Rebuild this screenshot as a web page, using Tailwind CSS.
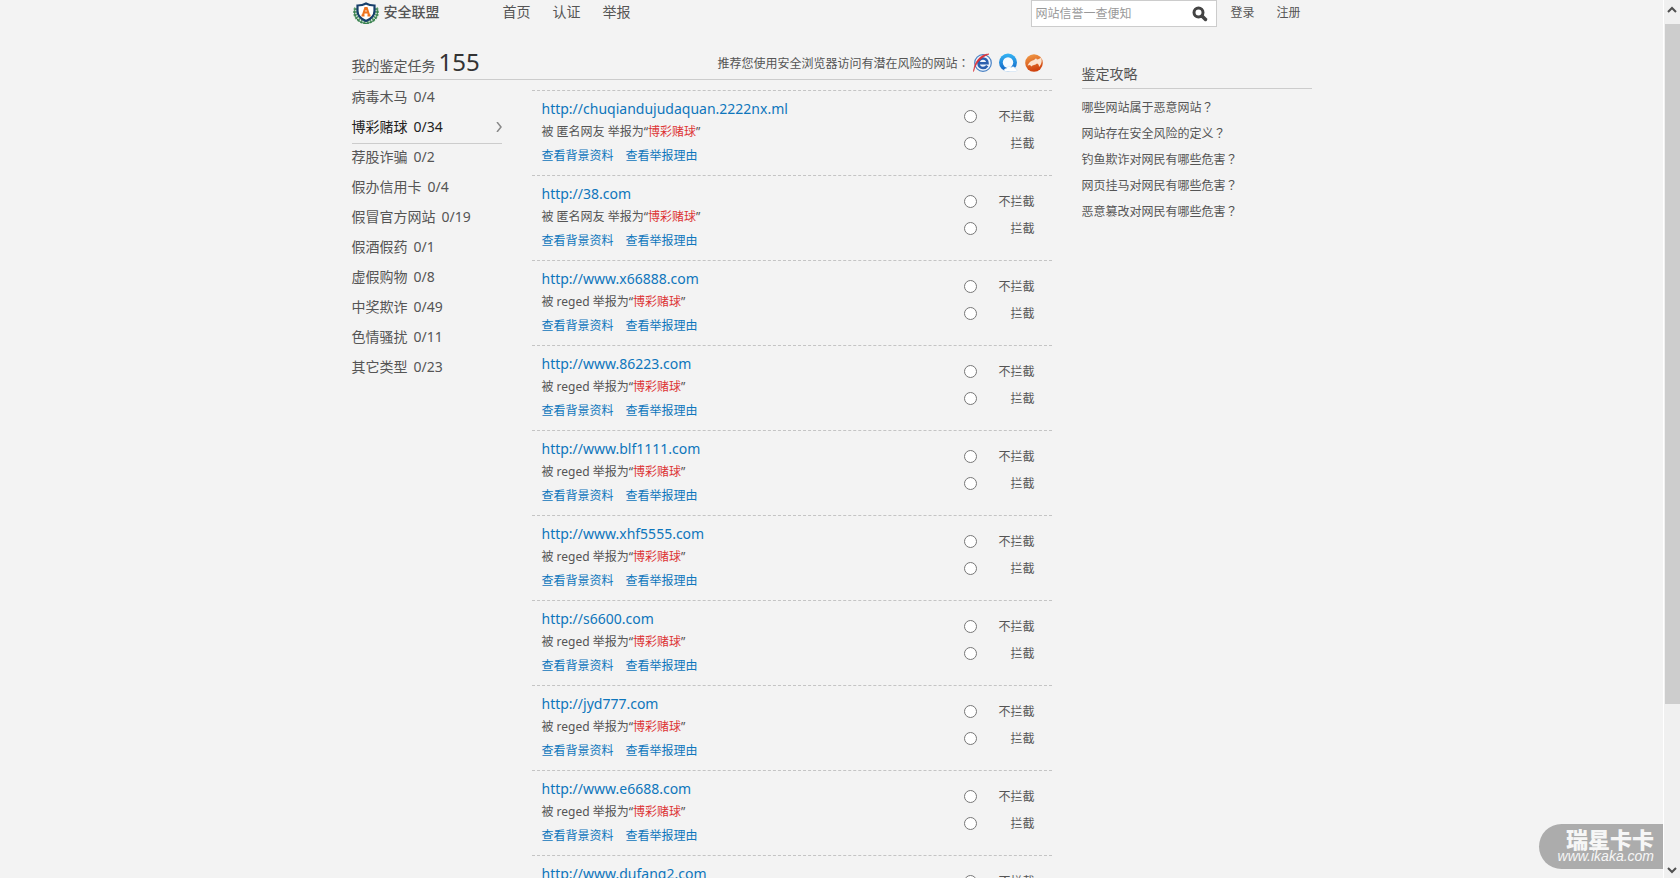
<!DOCTYPE html>
<html lang="zh-CN">
<head>
    <meta charset="UTF-8">
    <meta name="viewport" content="width=device-width, initial-scale=1.0">
    <title>安全联盟 - 我的鉴定任务</title>
    <!-- Tailwind CSS -->
    <script src="https://cdn.jsdelivr.net/npm/@tailwindcss/browser@4"></script>
</head>
<body class="flex h-screen overflow-hidden bg-[#f3f3f3] text-[#555] text-xs font-['Noto_Sans','Noto_Sans_CJK_SC',sans-serif]">
    <div class="relative flex-1 h-full overflow-hidden">
        <div class="mx-auto max-w-[960px]">
            <!-- Top bar -->
            <header class="flex items-start h-[26px]">
                <a href="#" class="flex items-center gap-1 w-[151px] h-6">
                    <svg class="w-[28px] h-[24px]" viewBox="0 0 28 24">
                        <path d="M4 8C1 15 6 22 14 22C22 22 27 15 24 8" fill="none" stroke="#5b9a6c" stroke-width="4" stroke-dasharray="2 1" />
                        <path d="M3 9C1 16 6 23 14 23.500C22 23 27 16 25 9" fill="none" stroke="#2f7a48" stroke-width="1" />
                        <path d="M14 3.500C11.500 5 8.500 5.500 5.500 5.500V11C5.500 16 9 19 14 21C19 19 22.500 16 22.500 11V5.500C19.500 5.500 16.500 5 14 3.500Z" fill="#fff" stroke="#173f6b" stroke-width="2.200" />
                        <path d="M9.500 15.500H12.500M15.500 15.500H18.500M11 15L13.300 8H14.700L17 15M12 12.500H16" fill="none" stroke="#ee7420" stroke-width="2.200" />
                    </svg>
                    <span class="text-sm leading-6 font-medium">安全联盟</span>
                </a>
                <nav class="flex gap-[22px] text-sm leading-6">
                    <a href="#">首页</a>
                    <a href="#">认证</a>
                    <a href="#">举报</a>
                </nav>
                <form class="ml-auto flex w-[186px] h-[27px] border border-[#ccc] bg-white">
                    <input type="text" aria-label="网站信誉" placeholder="网站信誉一查便知" class="w-full min-w-0 px-1 outline-none placeholder:text-[#999]">
                    <button type="button" aria-label="搜索" class="w-8 shrink-0 flex items-center justify-center">
                        <svg class="w-4 h-4" viewBox="0 0 16 16" fill="none" stroke="#444">
                            <circle cx="6.500" cy="6.500" r="4.500" stroke-width="3" />
                            <path d="M10 10L13.500 13.500" stroke-width="3.500" stroke-linecap="round" />
                        </svg>
                    </button>
                </form>
                <div class="flex gap-[22px] pl-[14px] w-[95px] leading-[26px]">
                    <a href="#">登录</a>
                    <a href="#">注册</a>
                </div>
            </header>

            <main class="flex gap-[30px] pt-5">
                <div class="w-[700px]">
                    <div class="flex items-start justify-between h-[34px] border-b border-[#ccc]">
                        <h1 class="flex items-baseline gap-[3px] text-sm leading-8">我的鉴定任务<span class="text-2xl leading-8 text-[#333]">155</span></h1>
                        <div class="flex items-center gap-[6px] pt-[2px] pr-2 h-8">
                            <p class="-mr-1">推荐您使用安全浏览器访问有潜在风险的网站<span class="font-['Noto_Sans_CJK_TC',sans-serif]" lang="zh-TW">：</span></p>
                            <a href="#" aria-label="IE">
                                <svg class="w-5 h-5" viewBox="0 0 20 20" fill="none">
                                    <circle cx="11" cy="10" r="8.300" fill="#eef4fc" stroke="#4a82c4" stroke-width="1.200" />
                                    <path d="M6.500 10.300H15.500C15.500 7 13.500 5.500 11 5.500C8.300 5.500 6.500 7.600 6.500 10.300C6.500 13 8.400 15 11 15C13 15 14.400 14.200 15.300 12.800" stroke="#2b5fae" stroke-width="2.600" />
                                    <path d="M17 1C9 1 2.500 8 1.500 18.500C3.500 11 8 4.500 17 1Z" fill="#dc2f35" stroke="#dc2f35" stroke-width="0.600" />
                                </svg>
                            </a>
                            <a href="#" aria-label="QQ浏览器">
                                <svg class="w-5 h-5" viewBox="0 0 20 20">
                                    <defs>
                                        <linearGradient id="qq" x1="0" y1="0" x2="0" y2="1"><stop offset="0" stop-color="#35b5f5" /><stop offset="1" stop-color="#1263c4" /></linearGradient>
                                    </defs>
                                    <circle cx="10" cy="9.500" r="9" fill="url(#qq)" />
                                    <circle cx="10" cy="9.500" r="5.200" fill="#f8fbff" />
                                    <path d="M8 18.500C5.500 18.500 5.500 15.500 8.500 15.500C9 13 12 12.500 13 14.500C15 13 17 14 17 15.500C19.500 15.800 19.500 18.500 17.500 18.500Z" fill="#fff" stroke="#c9dff3" stroke-width="0.600" />
                                </svg>
                            </a>
                            <a href="#" aria-label="猎豹浏览器">
                                <svg class="w-5 h-5" viewBox="0 0 20 20">
                                    <defs>
                                        <linearGradient id="lb" x1="0" y1="0" x2="0.300" y2="1"><stop offset="0" stop-color="#f3a04a" /><stop offset="1" stop-color="#cf420e" /></linearGradient>
                                    </defs>
                                    <circle cx="10" cy="10" r="8.800" fill="url(#lb)" />
                                    <path d="M3.500 12.500C5 9.500 7 7.500 10 7L12 5.200L13 6.500C15 6 16.500 4.500 17 5C18.500 7.500 17.500 11.500 15 14C15 12 14.500 11 13 10.500C11.500 12.500 8.500 11.500 7.500 13.500L6 12Z" fill="#fbe3cf" />
                                </svg>
                            </a>
                        </div>
                    </div>
                    <div class="flex justify-between">
                        <ul id="categories" class="w-[150px] pt-[2px] text-sm"></ul>
                        <div id="tasks" class="w-[520px] mt-[10px] border-t border-dashed border-[#c4c4c4]"></div>
                    </div>
                </div>
                <aside class="w-[230px] pt-4">
                    <h2 class="h-[27px] text-sm leading-6 border-b border-[#ccc]">鉴定攻略</h2>
                    <ul class="grid auto-rows-[26px] pt-[5px] leading-[26px]">
                        <li><a href="#">哪些网站属于恶意网站<span class="font-['Noto_Sans_CJK_TC',sans-serif]" lang="zh-TW">？</span></a></li>
                        <li><a href="#">网站存在安全风险的定义<span class="font-['Noto_Sans_CJK_TC',sans-serif]" lang="zh-TW">？</span></a></li>
                        <li><a href="#">钓鱼欺诈对网民有哪些危害<span class="font-['Noto_Sans_CJK_TC',sans-serif]" lang="zh-TW">？</span></a></li>
                        <li><a href="#">网页挂马对网民有哪些危害<span class="font-['Noto_Sans_CJK_TC',sans-serif]" lang="zh-TW">？</span></a></li>
                        <li><a href="#">恶意篡改对网民有哪些危害<span class="font-['Noto_Sans_CJK_TC',sans-serif]" lang="zh-TW">？</span></a></li>
                    </ul>
                </aside>
            </main>
        </div>

        <!-- Watermark -->
        <div class="absolute right-0 bottom-[9px] w-[124px] h-[45px] pt-1 pr-[9px] rounded-l-full bg-[#acacac] text-[#f6f6f6] text-right">
            <p class="text-[22px] leading-[22px] font-black">瑞星卡卡</p>
            <p class="text-sm leading-3 italic font-['Liberation_Sans',sans-serif]">www.ikaka.com</p>
        </div>
    </div>

    <!-- Scrollbar -->
    <div class="flex flex-col justify-between items-center w-[17px] h-full border-l border-white bg-[#f0f0f0]">
        <svg class="w-4 h-6" viewBox="0 0 16 24" fill="none" stroke="#505050" stroke-width="2"><path d="M4 12L8 8L12 12" /></svg>
        <div class="w-[15px] mb-auto h-[77.5%] bg-[#cdcdcd]"></div>
        <svg class="w-4 h-4" viewBox="0 0 16 16" fill="none" stroke="#505050" stroke-width="2"><path d="M4 6L8 10L12 6" /></svg>
    </div>

    <script>
        const categories = [
            ['病毒木马', '0/4'], ['博彩赌球', '0/34'], ['荐股诈骗', '0/2'], ['假办信用卡', '0/4'], ['假冒官方网站', '0/19'],
            ['假酒假药', '0/1'], ['虚假购物', '0/8'], ['中奖欺诈', '0/49'], ['色情骚扰', '0/11'], ['其它类型', '0/23']
        ];
        const tasks = [
            ['chuqiandujudaquan.2222nx.ml', '匿名网友'], ['38.com', '匿名网友'], ['www.x66888.com', 'reged'],
            ['www.86223.com', 'reged'], ['www.blf1111.com', 'reged'], ['www.xhf5555.com', 'reged'], ['s6600.com', 'reged'],
            ['jyd777.com', 'reged'], ['www.e6688.com', 'reged'], ['www.dufang2.com', 'reged']
        ];

        // The second category is the open one
        document.getElementById('categories').innerHTML = categories.map(([name, count], i) => `
            <li class="h-[30px]"><a href="#" class="flex items-center gap-[6px] ${i === 1 ? 'h-8 pb-[1px] border-b border-[#ccc] text-[#222]' : 'h-[30px]'}">
                <span>${name}</span><span>${count}</span>
                ${i === 1 ? '<svg class="ml-auto w-[6px] h-[10px]" viewBox="0 0 6 10" fill="none" stroke="#888" stroke-width="1.500"><path d="M1 0L5 5L1 10" /></svg>' : ''}
            </a></li>`).join('');

        document.getElementById('tasks').innerHTML = tasks.map(([site, user], i) => `
            <article class="flex justify-between h-[85px] pl-[10px] pr-[17px] border-b border-dashed border-[#c4c4c4]">
                <div class="pt-[7px]">
                    <h3 class="text-sm leading-[22px] text-[#0e76bc]"><a href="#">http://${site}</a></h3>
                    <p class="leading-6">被 ${user} 举报为“<span class="text-[#dd3333]">博彩赌球</span>”</p>
                    <p class="flex gap-3 leading-6 text-[#0e76bc]"><a href="#">查看背景资料</a><a href="#">查看举报理由</a></p>
                </div>
                <div class="w-[71px] pt-3 leading-[27px]">
                    <label class="flex items-center justify-between"><input type="radio" name="task${i}" class="w-[13px] h-[13px]">不拦截</label>
                    <label class="flex items-center justify-between"><input type="radio" name="task${i}" class="w-[13px] h-[13px]">拦截</label>
                </div>
            </article>`).join('');
    </script>
</body>
</html>
